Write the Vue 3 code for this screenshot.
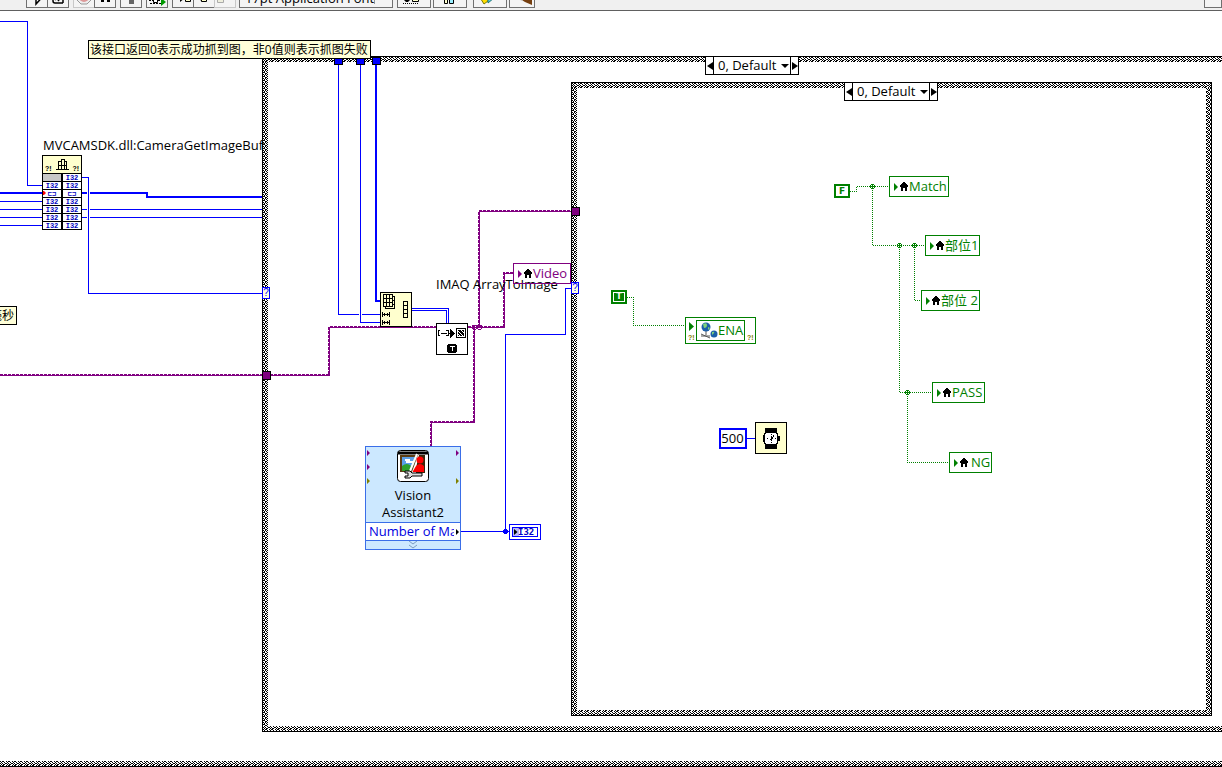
<script setup>
import { ref } from 'vue'

const outerCase = ref('0, Default')
const innerCase = ref('0, Default')
const cases = ['0, Default', '1']

const locals = [
  { text: 'Video', x: 513, y: 263, w: 58, tone: 'violet' },
  { text: 'Match', x: 889, y: 176, w: 60, tone: 'green' },
  { text: '部位1', x: 925, y: 235, w: 55, tone: 'green' },
  { text: '部位 2', x: 921, y: 290, w: 59, tone: 'green' },
  { text: 'PASS', x: 932, y: 382, w: 53, tone: 'green' },
  { text: 'NG', x: 949, y: 452, w: 43, tone: 'green spaced' },
]

const terminals = [
  ['', 'I32'],
  ['I32', 'I32'],
  ['⊏⊐', '⊏⊐'],
  ['I32', 'I32'],
  ['I32', 'I32'],
  ['I32', 'I32'],
  ['I32', 'I32'],
]

const blueThin = [
  'M0 21.5H27.5V185.5H43',
  'M82 177.5H88.5V293.5H262',
  'M0 201.5H43', 'M0 209.5H43', 'M0 217.5H43', 'M0 225.5H43',
  'M82 209.5H87M90 209.5H262', 'M82 217.5H87M90 217.5H262',
  'M338.5 64V314.5H359M362 314.5H380',
  'M360.5 64V322.5H380',
  'M412 308.5H448.5V323M412 310.5H446.5V323',
  'M461 531.5H509M505.5 531V334.5H565.5V288.5H571',
  'M747 438.5H755',
]
const blueThick = ['M0 193H43', 'M82 193H87M90 193H147V197H262', 'M376 64V301H380']
const violet = [
  'M0 375H263M270 375H329V327H436',
  'M468 327H504V273H513',
  'M479 327V211H571',
  'M474 327V422H431V446',
]
const green = [
  'M627 297.5H633.5V325.5H685',
  'M850 191.5H856.5V186.5H889',
  'M872.5 186V245.5H925',
  'M914.5 245V300.5H921',
  'M899.5 245V392.5H932',
  'M907.5 392V462.5H949',
]
const greenDots = [[872, 186], [899, 245], [914, 245], [907, 392]]

const place = (n) => ({ left: n.x + 'px', top: n.y + 'px', width: n.w + 'px' })
</script>

<template>
  <div class="app">
    <header class="toolbar">
      <button class="tool first" aria-label="Run"><svg width="20" height="20"><path d="M3 9h6V4l6 6.500-6 6.500v-5H3z" fill="#fff" stroke="#000" stroke-width="1.500"/></svg></button>
      <button class="tool join" aria-label="Run continuously"><svg width="20" height="20"><path d="M5 10v4q0 2 2 2h8M7 13l5-5M10 14l4-5M9 16h6M15 12v4" fill="none" stroke="#000" stroke-width="1.500"/></svg></button>
      <button class="tool gap faint" aria-label="Abort"><svg width="20" height="20"><path d="M7 3h6l4 4v6l-4 4H7l-4-4V7z" fill="#eee" stroke="#999"/><circle cx="10" cy="10" r="5" fill="#d99"/></svg></button>
      <button class="tool join" aria-label="Pause"><svg width="20" height="20"><path d="M6 6h3v9H6zM12 6h3v9h-3z" fill="#000"/></svg></button>
      <button class="tool gap" aria-label="Highlight execution"><svg width="20" height="20"><path d="M6 6h8v5l-2 2H8l-2-2z" fill="#ffe14a" stroke="#a08020"/><path d="M8 13h5v4H8z" fill="#666"/></svg></button>
      <button class="tool gap" aria-label="Retain wire values"><svg width="20" height="20"><path d="M2 13.500h4M11 13.500h4M3 16.500h12" stroke="#000" stroke-dasharray="2 1"/><path d="M6.500 10.500h4v5h-4z" fill="#fff" stroke="#000"/><path d="M14 11l5 4-5 4z" fill="#090"/></svg></button>
      <button class="tool gap" aria-label="Step into"><svg width="20" height="20"><path d="M2 10h5V7l5 4-5 4v-3H2z" fill="#000"/><path d="M12.500 7.500h5v7h-5z" fill="#ffc" stroke="#000"/></svg></button>
      <button class="tool join" aria-label="Step over"><svg width="20" height="20"><path d="M2 10h6M6 7l2 3-2 3" fill="none" stroke="#000" stroke-width="2"/><path d="M7.500 7.500h5v7h-5z" fill="#ffc" stroke="#000"/></svg></button>
      <button class="tool join faint" aria-label="Step out"><svg width="20" height="20"><path d="M2.500 9.500h6v6h-6zM9 12h5V8" fill="#eed" stroke="#aaa"/></svg></button>
      <select class="font-pick" aria-label="Text settings"><option>17pt Application Font</option></select>
      <button class="tool wide gap" aria-label="Align objects"><svg width="30" height="20"><path d="M4 12l4-4 4 4-3 3H7z" fill="#000"/><path d="M13.500 7.500h6v7h-6z" fill="#ffc" stroke="#000"/><path d="M4 16.500h16" stroke="#000" stroke-dasharray="1 1"/></svg></button>
      <button class="tool wide narrow-gap" aria-label="Distribute objects"><svg width="30" height="20"><path d="M4 12h5" stroke="#000" stroke-width="2"/><path d="M9.500 8.500h3v8h-3z" fill="#ffc" stroke="#000"/><path d="M14.500 8.500h4v8h-4z" fill="#9ef" stroke="#000"/></svg></button>
      <button class="tool wide big-gap" aria-label="Reorder"><svg width="30" height="20"><path d="M4 9l5-3v5h4v3l-4 3z" fill="#fd0" stroke="#770"/><path d="M13 7l6 4-6 5z" fill="#5cd" stroke="#277"/></svg></button>
      <button class="tool mid" aria-label="Clean up diagram"><svg width="24" height="20"><path d="M7 10l6-3 9 2v9l-7-3z" fill="#753f10"/><path d="M5 10l8 3" stroke="#bbb" stroke-width="2"/></svg></button>
      <button class="tool last" aria-label="Help"></button>
    </header>

    <main class="diagram">
      <svg class="defs" width="0" height="0" aria-hidden="true">
        <defs>
          <pattern id="weave" width="6" height="4" patternUnits="userSpaceOnUse">
            <path d="M0 0h1v1H0zM2 0h2v1H2zM1 1h1v1H1zM4 1h1v1H4zM0 2h1v1H0zM2 2h1v1H2zM5 2h1v1H5zM1 3h1v1H1zM3 3h2v1H3z" fill="#000" shape-rendering="crispEdges"/>
          </pattern>
          <pattern id="weave-tall" width="4" height="4" patternUnits="userSpaceOnUse">
            <path d="M0 0h1v1H0zM2 0h1v1H2zM1 1h1v1H1zM3 1h1v1H3zM0 2h2v1H0zM2 3h2v1H2z" fill="#000" shape-rendering="crispEdges"/>
          </pattern>
        </defs>
      </svg>

      <section v-for="f in ['outer', 'inner']" :key="f" :class="['frame', f]">
        <svg class="weave"><rect width="100%" height="100%" fill="url(#weave)"/></svg>
        <div class="sides"><svg class="weave"><rect width="100%" height="100%" fill="url(#weave-tall)"/></svg></div>
        <div class="inside"></div>
      </section>
      <div class="loop-edge"><svg class="weave"><rect width="100%" height="100%" fill="url(#weave)"/></svg></div>

      <svg class="wires" shape-rendering="crispEdges" fill="none" aria-hidden="true">
        <path v-for="d in blueThin" :key="d" :d="d" stroke="#00f"/>
        <path v-for="d in blueThick" :key="d" :d="d" stroke="#00f" stroke-width="2"/>
        <g v-for="d in violet" :key="d" stroke="#800080">
          <path :d="d" stroke-width="2" stroke-dasharray="3 1"/>
          <path :d="d" transform="translate(.5 .5)"/>
        </g>
        <path v-for="d in green" :key="d" :d="d" stroke="#008000" stroke-dasharray="1 1"/>
        <g v-for="p in greenDots" :key="p[0]" :transform="`translate(${p[0] - 2} ${p[1] - 2})`">
          <path d="M1 0h3v1h1v3h-1v1h-3v-1h-1v-3h1z" fill="#008000"/>
          <path d="M1 1h1v1h-1zM3 1h1v1h-1zM1 3h1v1h-1zM3 3h1v1h-1z" fill="#fff"/>
        </g>
        <path d="M504 529h3v1h1v3h-1v1h-3v-1h-1v-3h1z" fill="#00f"/>
        <path d="M473 325h3l1 1v2l-1 1h-3l-1-1v-2zM478 325h3l1 1v2l-1 1h-3l-1-1v-2z" stroke="#800080"/>
        <path d="M334.500 58.500h8v6h-8zM356.500 58.500h8v6h-8zM372.500 57.500h8v7h-8z" fill="#00f" stroke="#000"/>
        <path d="M262.500 371.500h8v8h-8zM571.500 207.500h8v8h-8z" fill="#800080" stroke="#000"/>
      </svg>

      <p class="note comment">该接口返回0表示成功抓到图，非0值则表示抓图失败</p>
      <p class="note clipped">毫秒</p>

      <div class="case outer-case">
        <button aria-label="Previous case"><svg width="6" height="8"><path d="M6 0v8L0 4z"/></svg></button>
        <select v-model="outerCase" aria-label="Outer case"><option v-for="c in cases" :key="c">{{ c }}</option></select>
        <svg class="drop" width="8" height="4"><path d="M0 0h8L4 4z"/></svg>
        <button aria-label="Next case"><svg width="6" height="8"><path d="M0 0v8l6-4z"/></svg></button>
      </div>
      <div class="case inner-case">
        <button aria-label="Previous case"><svg width="6" height="8"><path d="M6 0v8L0 4z"/></svg></button>
        <select v-model="innerCase" aria-label="Inner case"><option v-for="c in cases" :key="c">{{ c }}</option></select>
        <svg class="drop" width="8" height="4"><path d="M0 0h8L4 4z"/></svg>
        <button aria-label="Next case"><svg width="6" height="8"><path d="M0 0v8l6-4z"/></svg></button>
      </div>

      <p class="label dll-label">MVCAMSDK.dll:CameraGetImageBuffer</p>
      <div class="dll">
        <div class="dll-head">
          <span>?!</span>
          <svg width="13" height="12" shape-rendering="crispEdges"><path d="M2.500 2.500h3v8h-3zM5.500.500h3v10h-3zM8.500 2.500h2v8h-2zM2 6.500h9M0 10.500h13" fill="none" stroke="#000"/></svg>
          <span>?!</span>
        </div>
        <div class="dll-rows">
          <template v-for="(row, i) in terminals" :key="i">
            <span v-for="(cell, j) in row" :key="j" :class="['term', { blank: !cell }]">{{ cell }}</span>
          </template>
        </div>
        <svg class="coerce" width="3" height="4"><path d="M0 0h1l2 2-2 2H0z" fill="#f00"/></svg>
      </div>

      <span class="selector sel-outer">?</span>
      <span class="selector sel-inner">?</span>

      <div class="node index">
        <svg width="30" height="33" shape-rendering="crispEdges" fill="none" stroke="#000">
          <path d="M2.500 1.500h9v12h-9zM5.500 1.500v12M8.500 1.500v12M2.500 5.500h9M2.500 9.500h9M11.500 3.500h2v12h-9v-2M11.500 7.500h2M11.500 11.500h2"/>
          <path d="M22.500 8.500h4v16h-4zM22.500 12.500h4M22.500 16.500h4M22.500 20.500h4"/>
          <path d="M1.500 19v5M8.500 19v5M2 21.500h7M3.500 20v3M6.500 20v3M1.500 27v5M8.500 27v5M2 29.500h7M3.500 28v3M6.500 28v3"/>
        </svg>
      </div>
      <div class="node imaq">
        <svg width="30" height="30" shape-rendering="crispEdges">
          <path d="M3 6.500H1.500v5H3M9 6.500h2.500v5H9M4 9.500h6M11 9.500h3" fill="none" stroke="#000"/>
          <path d="M13 5l5 4.500-5 4.500z"/><path d="M19 4h10v10H19z"/>
          <path d="M21 7l5 5M24 6l4 4M21 10l2 2M20.500 5.500h7v7h-7z" stroke="#fff" fill="none"/>
          <path d="M11 20h8v1h1v7h-1v1h-8v-1h-1v-7h1z"/><path d="M13 22h5v1h-2v4h-1v-4h-2z" fill="#fff"/>
        </svg>
      </div>
      <p class="label imaq-label">IMAQ ArrayToImage</p>

      <article class="vision">
        <svg class="ports" width="94" height="40"><path d="M1 3l3 3-3 3zM1 17l3 3-3 3zM90 3l3 3-3 3z" fill="#800080"/><path d="M1 31l3 3-3 3zM90 31l3 3-3 3z" fill="#808000"/></svg>
        <svg class="picture" width="32" height="32">
          <rect x=".500" y=".500" width="31" height="31" rx="3" fill="#fff" stroke="#000"/>
          <path d="M1 3h30" stroke="#000" stroke-width="3"/>
          <path d="M3 5h18L15 22H3z" fill="#5b3c12"/><path d="M5 7h14l-5 14H5z" fill="#5b9fe8"/>
          <path d="M8 9h5v2h3v2H9v-2H8z" fill="#fff"/><path d="M5 16q5-4 9 0v5H5z" fill="#2ca12c"/>
          <path d="M22 5h6v18h-9v-5z" fill="#3a2408"/><circle cx="23" cy="10" r="3.500" fill="#f00"/><path d="M16 21l3-5q4-4 8 0v6H16z" fill="#f00"/><path d="M20 4l-7 17" stroke="#fff" stroke-width="2"/>
          <path d="M8 21h5l2 2h10v3H15l-2 2H8v-2h3v-3H8z" fill="#ddd" stroke="#000"/>
        </svg>
        <h2>Vision<br>Assistant2</h2>
        <p class="output"><span>Number of Matches</span></p>
        <button class="expand" aria-label="Expand"><svg width="8" height="8"><path d="M0 0l4 3 4-3M0 4l4 3 4-3" fill="none" stroke="#7a9bc0"/></svg></button>
      </article>

      <span class="indicator"><svg width="4" height="8"><path d="M0 1l3.500 3L0 7z"/></svg><b>I32</b></span>

      <div v-for="n in locals" :key="n.text" :class="['local', n.tone]" :style="place(n)">
        <svg class="tri" width="4" height="8"><path d="M0 0l4 4-4 4z" fill="currentColor"/></svg>
        <svg class="home" width="8" height="9" shape-rendering="crispEdges"><path d="M3 0h2v1h1v1h1v1h1v2h-1v4h-2v-3h-2v3h-2v-4h-1v-2h1v-1h1v-1h1z" fill="#000"/></svg>
        <span>{{ n.text }}</span>
      </div>

      <span class="bool true">T</span>
      <span class="bool false">F</span>

      <div class="ena">
        <svg class="go" width="5" height="9"><path d="M0 0l5 4.500L0 9z" fill="#008000"/></svg>
        <i class="err">?!</i>
        <div class="ena-body">
          <svg width="18" height="17"><path d="M6 9v4M1 14h9M1 12l9 4" stroke="#555" fill="none"/><circle cx="6" cy="5" r="4.500" fill="#1c5fa8"/><path d="M3 2q4-2 4 1T4 6zM8 5l2 1-2 2z" fill="#7ed27a"/><circle cx="14" cy="12" r="3.500" fill="#1c5fa8"/><path d="M12 10q3-1 2 1l-2 2z" fill="#7ed27a"/></svg>
          <span>ENA</span>
        </div>
        <i class="err">?!</i>
      </div>

      <input class="constant" value="500" aria-label="Wait milliseconds">
      <div class="node wait">
        <svg width="30" height="30" shape-rendering="crispEdges"><path d="M9 5h12v5H9zM9 21h12v5H9zM8 10h14v3h2v5h-2v3H8v-2H7v-7h1z"/><path d="M10 10h10v1h1v9h-1v1H10v-1H9v-9h1z" fill="#fff"/><path d="M15 13v5M14 16.500h2M17.500 12v2M16.500 14v2M11 15.500h1M19 15.500h1M15 19v1M15 11v1" stroke="#000" fill="none"/></svg>
      </div>
    </main>
  </div>
</template>

<style>
html, body { overflow: hidden; background: #fff; }
</style>

<style scoped>
* { box-sizing: border-box; }
.app { min-height: 100vh; display: flex; flex-direction: column; position: relative; overflow: hidden; background: #fff; color: #000; font: 13px/17px "Open Sans", "Noto Sans CJK SC", sans-serif; }
p, h2 { margin: 0; font-weight: normal; font-size: 13px; }
button, select, input { font: inherit; color: inherit; padding: 0; margin: 0; border: 0; border-radius: 0; background: none; appearance: none; outline: none; }
svg { display: block; flex: none; }

.toolbar { height: 11px; display: flex; align-items: flex-end; padding: 0 0 1px 26px; background: #f0f0f0; border-bottom: 1px solid #606060; overflow: hidden; position: relative; z-index: 3; }
.tool { flex: none; width: 22px; height: 22px; margin-bottom: 1px; border: 1px solid #707070; background: #f4f4f4; display: flex; align-items: flex-end; justify-content: center; overflow: hidden; }
.faint { border-color: #c8c8c8; }
.join { margin-left: -1px; }
.gap { margin-left: 4px; }
.narrow-gap { margin-left: 2px; }
.big-gap { margin-left: 6px; }
.wide { width: 34px; }
.mid { width: 26px; margin-left: 2px; }
.last { margin-left: auto; width: 18px; }
.font-pick { flex: none; width: 154px; height: 22px; margin: 0 0 1px 3px; padding: 2px 0 0 5px; border: 1px solid #707070; background: linear-gradient(#999, #999) 134px 0 / 1px 17px no-repeat #f4f4f4; line-height: 18px; }

.diagram { position: absolute; inset: 0; overflow: hidden; }
.defs, .frame, .weave, .wires, .loop-edge, .sides { position: absolute; }
.weave { inset: 0; width: 100%; height: 100%; }
.sides { inset: 5px 0; background: #fff; }
.frame { border: 1px solid #000; }
.frame .inside { position: absolute; inset: 5px; background: #fff; }
.outer { left: 262px; right: -10px; top: 56px; height: 676px; }
.inner { left: 571px; right: 10px; top: 82px; height: 634px; }
.loop-edge { left: 0; right: 0; top: 761px; height: 6px; border-bottom: 1px solid #000; }
.wires { inset: 0; width: 100%; height: 100%; }

.note, .label, .case, .dll, .selector, .node, .vision, .indicator, .local, .bool, .ena, .constant { position: absolute; }
.note { border: 1px solid #000; background: #ffffd8; font-size: 12px; line-height: 17px; height: 19px; white-space: nowrap; padding: 0 2px 0 1px; }
.comment { left: 88px; top: 40px; }
.clipped { left: -12px; top: 306px; width: 29px; text-align: right; }
.label { white-space: nowrap; }
.dll-label { left: 43px; top: 137px; width: 221px; overflow: hidden; }
.imaq-label { left: 436px; top: 276px; }

.case { display: flex; align-items: stretch; width: 94px; height: 19px; border: 1px solid #000; background: #fff; }
.case button { width: 8px; display: flex; align-items: center; justify-content: center; flex: none; }
.case button:first-child { border-right: 1px solid #000; }
.case button:last-child { border-left: 1px solid #000; }
.case select { flex: 1; min-width: 0; padding-left: 4px; }
.drop { align-self: center; margin: 0 1px 0 -8px; }
.outer-case { left: 705px; top: 56px; }
.inner-case { left: 844px; top: 82px; }

.dll { left: 42px; top: 155px; width: 40px; border: 1px solid #000; background: #000; }
.dll-head { height: 17px; display: flex; align-items: flex-end; justify-content: space-between; padding: 0 2px; background: #ffffce; font: bold 7px/8px "Liberation Sans", sans-serif; }
.dll-head svg { margin-bottom: 2px; }
.dll-rows { display: grid; grid-template-columns: 18px 18px; column-gap: 2px; row-gap: 1px; padding-top: 1px; }
.term { height: 7px; background: #fff; color: #0000c0; font: bold 7px/8px "Liberation Mono", monospace; text-align: center; overflow: hidden; }
.blank { background: #c8c8c8; }
.coerce { position: absolute; left: 0; top: 35px; }

.selector { width: 8px; height: 12px; border: 1px solid #00f; background: #ffffe0; color: #00f; font: 10px/10px "Liberation Sans", sans-serif; text-align: center; }
.sel-outer { left: 262px; top: 287px; }
.sel-inner { left: 571px; top: 282px; }

.node { border: 1px solid #000; background: #ffffce; width: 32px; }
.index { left: 380px; top: 292px; height: 35px; }
.imaq { left: 436px; top: 323px; height: 32px; background: #fff; }
.wait { left: 755px; top: 422px; height: 32px; }

.vision { left: 365px; top: 446px; width: 96px; border: 1px solid #3a6ee8; background: #cce8ff; display: flex; flex-direction: column; align-items: center; }
.ports { position: absolute; left: 0; top: 0; }
.picture { margin-top: 3px; }
.vision h2 { margin-top: 5px; height: 35px; line-height: 17px; text-align: center; }
.output { width: 100%; height: 19px; border: solid #3a6ee8; border-width: 1px 0; background: #fff; color: #0000e0; display: flex; padding: 0 6px 0 3px; position: relative; }
.output span { overflow: hidden; white-space: nowrap; }
.output::after { content: ""; position: absolute; right: 1px; top: 6px; border: 3px solid transparent; border-left-color: #000; border-right: 0; }
.expand { width: 100%; height: 8px; display: flex; justify-content: center; }

.indicator { left: 509px; top: 524px; width: 32px; height: 16px; border: 1px solid #00f; outline: 1px solid #00f; outline-offset: -4px; background: linear-gradient(#b8b8f8, #b8b8f8) 2px 2px / 7px 10px no-repeat #fff; display: flex; align-items: center; padding-left: 4px; color: #0000c0; font: bold 9px/10px "DejaVu Sans Mono", monospace; }
.indicator svg { color: #000; }

.local { height: 21px; border: 1px solid currentColor; background: #fff; display: flex; align-items: center; padding-left: 4px; white-space: nowrap; }
.local span { margin-left: 1px; line-height: 19px; }
.local.spaced span { margin-left: 3px; }
.home { margin-left: 2px; }
.green { color: #008000; }
.violet { color: #800080; background: none; }

.bool { width: 16px; height: 14px; border: 2px solid #008000; color: #008000; background: #fff; font: bold 9px/10px "DejaVu Sans", sans-serif; text-align: center; }
.true { left: 611px; top: 290px; color: #fff; background: #008000; outline: 1px solid #fff; outline-offset: -3px; font-size: 8px; }
.false { left: 834px; top: 184px; }

.ena { left: 685px; top: 317px; width: 71px; height: 27px; border: 1px solid #008000; background: #fff; color: #008000; display: flex; align-items: center; }
.go { position: absolute; left: 3px; top: 4px; }
.err { width: 10px; padding-left: 2px; align-self: flex-end; color: #808000; font: bold 7px/10px "Liberation Sans", sans-serif; }
.ena-body { flex: 1; height: 21px; border: 1px solid #008000; display: flex; align-items: center; padding-left: 3px; }

.constant { left: 719px; top: 428px; width: 28px; height: 21px; border: 2px solid #00f; padding: 0 1px 1px 0; background: #fff; text-align: center; }
</style>
